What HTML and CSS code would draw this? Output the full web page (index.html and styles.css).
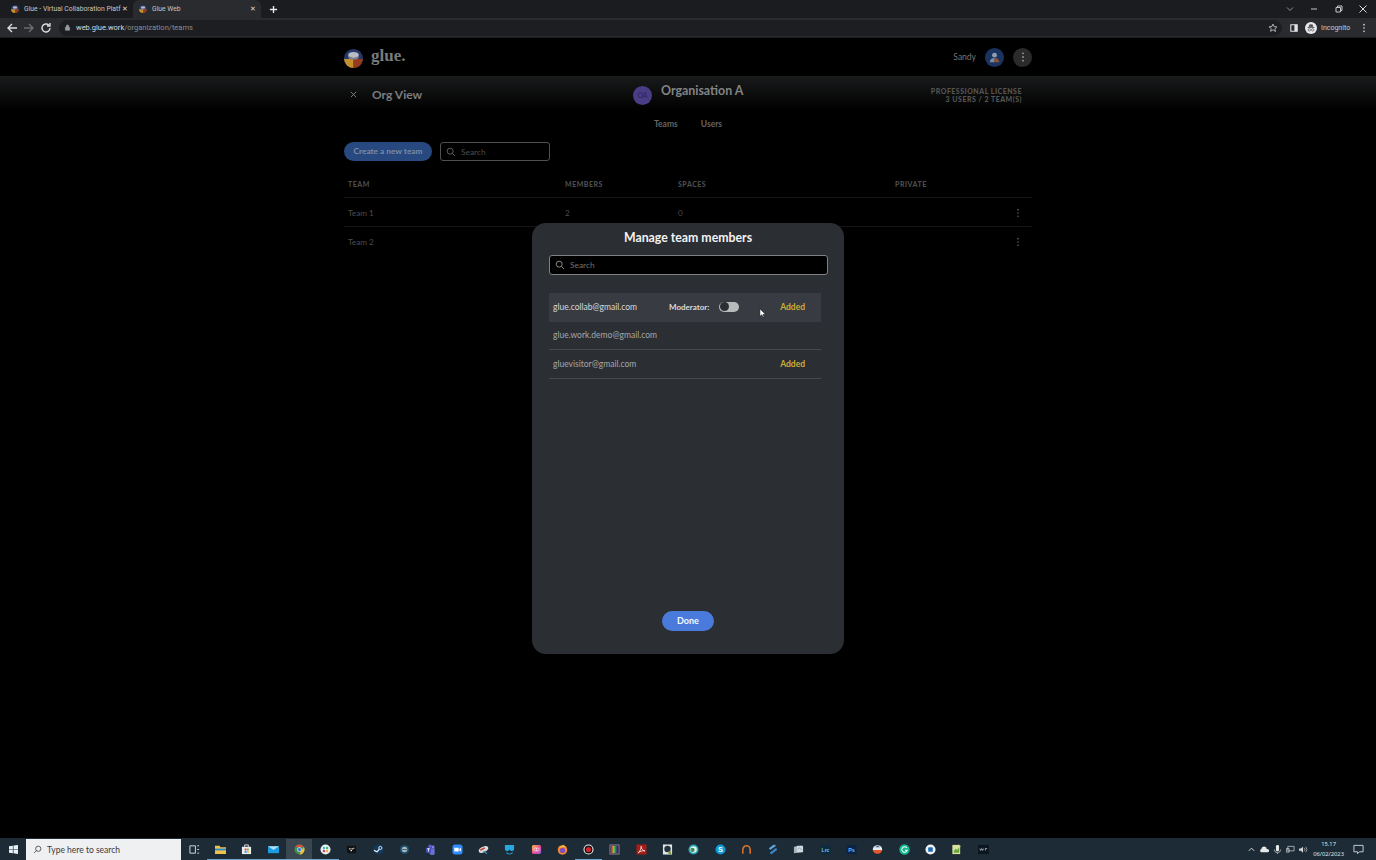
FILE: index.html
```html
<!DOCTYPE html>
<html lang="en">
<head>
<meta charset="utf-8">
<title>Glue Web</title>
<link rel="stylesheet" href="styles.css">
</head>
<body>
<div class="tabstrip">
  <div class="tab">
    <svg class="favicon" viewBox="0 0 16 16"><use href="#glue-logo"/></svg>
    <span class="tab-title">Glue - Virtual Collaboration Platf</span>
    <span class="tab-x">✕</span>
  </div>
  <div class="tab tab-active">
    <svg class="favicon" viewBox="0 0 16 16"><use href="#glue-logo"/></svg>
    <span class="tab-title">Glue Web</span>
    <span class="tab-x">✕</span>
  </div>
  <svg class="tab-new" viewBox="0 0 10 10"><path d="M5 1v8M1 5h8" stroke="#e8eaed" stroke-width="1.5"/></svg>
  <div class="win-controls">
    <svg viewBox="0 0 10 10"><path d="M2 3.5l3 3 3-3" fill="none" stroke="#8f9296" stroke-width="1"/></svg>
    <svg viewBox="0 0 10 10"><path d="M2 5h6" stroke="#c4c6c9" stroke-width="1"/></svg>
    <svg viewBox="0 0 10 10"><path d="M2 3.5h4.500v4.500h-4.500zM3.500 3.500v-1.500h4.500v4.500h-1.500" fill="none" stroke="#c4c6c9" stroke-width="1"/></svg>
    <svg viewBox="0 0 10 10"><path d="M1.500 1.500l7 7M8.500 1.500l-7 7" stroke="#d6d8da" stroke-width="1"/></svg>
  </div>
</div>
<div class="toolbar">
  <svg class="nav" viewBox="0 0 12 12"><path d="M11 6H2M6 2L2 6l4 4" fill="none" stroke="#dadce0" stroke-width="1.400"/></svg>
  <svg class="nav" viewBox="0 0 12 12"><path d="M1 6h9M6 2l4 4-4 4" fill="none" stroke="#6c6e71" stroke-width="1.400"/></svg>
  <svg class="nav" viewBox="0 0 12 12"><path d="M10 6a4 4 0 1 1-1.200-2.900M10 1v3H7" fill="none" stroke="#dadce0" stroke-width="1.400"/></svg>
  <div class="omnibox">
    <svg class="lock" viewBox="0 0 10 10"><path d="M2 4.500h6V9H2zM3.300 4.500V3a1.700 1.700 0 0 1 3.400 0v1.500" fill="#9a9c9f" stroke="#9a9c9f" stroke-width=".8" fill-rule="nonzero"/></svg>
    <span class="url"><span class="url-host">web.glue.work</span>/organization/teams</span>
    <svg class="star" viewBox="0 0 12 12"><path d="M6 1.300l1.400 3.100 3.300.3-2.500 2.200.8 3.300L6 8.200l-2.900 1.800.8-3.300-2.600-2.200 3.400-.3z" fill="none" stroke="#c8cacc" stroke-width="1"/></svg>
  </div>
  <svg class="panel" viewBox="0 0 10 10"><path d="M1 1h8v8H1z" fill="none" stroke="#e3e4e6" stroke-width="1.300"/><path d="M5.500 1H9v8H5.500z" fill="#e3e4e6"/></svg>
  <div class="incognito">
    <svg class="incognito-icon" viewBox="0 0 12 12"><circle cx="6" cy="6" r="6" fill="#e8e9ea"/><path d="M2.500 5.500h7M4 5.300l.6-2.500h2.800l.6 2.500" fill="#55585c" stroke="#55585c" stroke-width=".8"/><circle cx="4.300" cy="7.800" r="1.200" fill="none" stroke="#55585c" stroke-width=".7"/><circle cx="7.700" cy="7.800" r="1.200" fill="none" stroke="#55585c" stroke-width=".7"/></svg>
    <span>Incognito</span>
  </div>
  <svg class="chrome-menu" viewBox="0 0 4 12"><circle cx="2" cy="2" r="1" fill="#dadce0"/><circle cx="2" cy="6" r="1" fill="#dadce0"/><circle cx="2" cy="10" r="1" fill="#dadce0"/></svg>
</div>

<main class="page">
  <header class="app-header">
    <div class="wrap app-header-inner">
      <div class="brand">
        <svg class="brand-logo" viewBox="0 0 16 16"><use href="#glue-logo"/></svg>
        <span class="brand-name">glue.</span>
      </div>
      <div class="account">
        <span class="account-name">Sandy</span>
        <span class="avatar"><svg viewBox="0 0 20 20"><circle cx="10" cy="7.500" r="2.600" fill="#8d9cb3"/><path d="M5 15c0-3 2.500-4.500 5-4.500V15z" fill="#7b8ba3"/><path d="M10 10.500c2.500 0 5 1.500 5 4.500h-5z" fill="#8f5429"/></svg></span>
        <span class="more"><svg viewBox="0 0 4 12"><circle cx="2" cy="1.600" r="1.100" fill="#9a9b9d"/><circle cx="2" cy="6" r="1.100" fill="#9a9b9d"/><circle cx="2" cy="10.400" r="1.100" fill="#9a9b9d"/></svg></span>
      </div>
    </div>
  </header>

  <section class="org-bar">
    <div class="wrap org-bar-inner">
      <div class="org-left">
        <svg class="org-close" viewBox="0 0 8 8"><path d="M1 1l6 6M7 1L1 7" stroke="#8a8b8c" stroke-width="1"/></svg>
        <span class="org-view">Org View</span>
      </div>
      <div class="org-center">
        <span class="org-badge">OA</span>
        <span class="org-name">Organisation A</span>
      </div>
      <div class="org-license">PROFESSIONAL LICENSE<br>3 USERS / 2 TEAM(S)</div>
    </div>
  </section>

  <div class="wrap">
    <nav class="subnav"><span>Teams</span><span>Users</span></nav>
    <div class="actions">
      <span class="btn-create">Create a new team</span>
      <div class="search-dim">
        <svg class="search-icon" viewBox="0 0 12 12"><circle cx="5" cy="5" r="3.600" fill="none" stroke="#6f7071" stroke-width="1"/><path d="M7.800 7.800l3 3" stroke="#6f7071" stroke-width="1"/></svg>
        <span>Search</span>
      </div>
    </div>
    <div class="table">
      <div class="t-row t-head"><span>TEAM</span><span>MEMBERS</span><span>SPACES</span><span>PRIVATE</span><span></span></div>
      <div class="t-row"><span>Team 1</span><span>2</span><span>0</span><span></span><svg class="kebab" viewBox="0 0 4 12"><circle cx="2" cy="2" r="1" fill="#5c5c5c"/><circle cx="2" cy="6" r="1" fill="#5c5c5c"/><circle cx="2" cy="10" r="1" fill="#5c5c5c"/></svg></div>
      <div class="t-row"><span>Team 2</span><span></span><span></span><span></span><svg class="kebab" viewBox="0 0 4 12"><circle cx="2" cy="2" r="1" fill="#5c5c5c"/><circle cx="2" cy="6" r="1" fill="#5c5c5c"/><circle cx="2" cy="10" r="1" fill="#5c5c5c"/></svg></div>
    </div>
  </div>

  <div class="modal">
    <h2 class="modal-title">Manage team members</h2>
    <div class="modal-search">
      <svg class="search-icon" viewBox="0 0 12 12"><circle cx="5" cy="5" r="3.600" fill="none" stroke="#a3a5a8" stroke-width="1"/><path d="M7.800 7.800l3 3" stroke="#a3a5a8" stroke-width="1"/></svg>
      <span>Search</span>
    </div>
    <div class="members">
      <div class="member member-hover">
        <span class="member-mail">glue.collab@gmail.com</span>
        <span class="mod-label">Moderator:</span>
        <span class="toggle"><span class="toggle-knob"></span></span>
        <span class="added">Added</span>
      </div>
      <div class="member">
        <span class="member-mail">glue.work.demo@gmail.com</span>
      </div>
      <div class="member">
        <span class="member-mail">gluevisitor@gmail.com</span>
        <span class="added">Added</span>
      </div>
    </div>
    <span class="btn-done">Done</span>
  </div>
  <svg class="cursor" viewBox="0 0 8 12"><path d="M1 .5v9l2.200-2 1.300 3.200 1.300-.6-1.300-3h3z" fill="#fff" stroke="#000" stroke-width=".6"/></svg>
</main>

<footer class="taskbar">
  <div class="start"><svg viewBox="0 0 10 10"><path d="M0 1.300l4.300-.6v4H0zM5 .6L10 0v4.700H5zM0 5.300h4.300v4L0 8.700zM5 5.300h5V10l-5-.7z" fill="#e8f0f5"/></svg></div>
  <div class="win-search">
    <svg viewBox="0 0 12 12"><circle cx="7" cy="5" r="3.500" fill="none" stroke="#333" stroke-width="1"/><path d="M4.500 7.500L1.500 10.500" stroke="#333" stroke-width="1"/></svg>
    <span>Type here to search</span>
  </div>
  <div class="tasks">
    <span class="task"><svg viewBox="0 0 12 12"><path d="M1 2h6v8H1zM9 2h2M9 6h2M9 10h2" fill="none" stroke="#dfe5e8" stroke-width="1"/></svg></span>
    <span class="task task-open"><svg viewBox="0 0 12 12"><path d="M0 2h5l1 1.500h6V11H0z" fill="#f0c24b"/><path d="M0 5h12v2H0z" fill="#2c8ac9"/></svg></span>
    <span class="task task-open"><svg viewBox="0 0 12 12"><path d="M1 3h10v8H1z" fill="#e9edf0"/><path d="M4 3V1h4v2" fill="none" stroke="#e9edf0"/><path d="M4 5h2v2H4z" fill="#e0442e"/><path d="M6.500 5h2v2h-2z" fill="#6fb33f"/><path d="M4 7.500h2v2H4z" fill="#2f8fd6"/><path d="M6.500 7.500h2v2h-2z" fill="#f2b632"/></svg></span>
    <span class="task task-open"><svg viewBox="0 0 12 12"><path d="M0 2.500h12V10H0z" fill="#1d9be0"/><path d="M0 2.500l6 4 6-4z" fill="#a9e0fb"/></svg></span>
    <span class="task task-active"><svg viewBox="0 0 12 12"><circle cx="6" cy="6" r="5.500" fill="#3f8f4e"/><path d="M6 .5a5.500 5.500 0 0 1 4.800 2.800H6z" fill="#dd4c3a"/><path d="M1.200 3.300A5.500 5.500 0 0 1 6 .5v3z" fill="#dd4c3a"/><path d="M10.800 3.300A5.500 5.500 0 0 1 6 11.500L8 7z" fill="#eec03f"/><circle cx="6" cy="6" r="2.300" fill="#3a7bd5" stroke="#eee" stroke-width=".8"/></svg></span>
    <span class="task task-open"><svg viewBox="0 0 12 12"><circle cx="6" cy="6" r="5.500" fill="#e9eef0"/><circle cx="4.300" cy="4.300" r="1.300" fill="#3fb7d8"/><circle cx="7.700" cy="4.300" r="1.300" fill="#4cb56f"/><circle cx="4.300" cy="7.700" r="1.300" fill="#d8336b"/><circle cx="7.700" cy="7.700" r="1.300" fill="#ecb22e"/></svg></span>
    <span class="task"><svg viewBox="0 0 12 12"><rect x="1" y="2" width="10" height="8" rx="1.500" fill="#111"/><path d="M3.500 4.500h1.500V6H3.500zM6 4.500h1.500V6H6zM8 4h1v1.500H8zM5 6.500h1.500V8H5z" fill="#eee"/></svg></span>
    <span class="task"><svg viewBox="0 0 12 12"><circle cx="6" cy="6" r="5.500" fill="#123a5c"/><circle cx="8" cy="4.300" r="1.700" fill="none" stroke="#e8eef2"/><path d="M1 7l3.500 1.500L7 5.500" fill="none" stroke="#e8eef2" stroke-width="1.400"/></svg></span>
    <span class="task"><svg viewBox="0 0 12 12"><circle cx="6" cy="6" r="5" fill="#20506f"/><circle cx="6" cy="6" r="3" fill="#a9b6bd"/><path d="M3.500 6h5" stroke="#3b5c70"/></svg></span>
    <span class="task"><svg viewBox="0 0 12 12"><circle cx="8.800" cy="3.200" r="1.600" fill="#7b83eb"/><circle cx="5.600" cy="2.600" r="2" fill="#5b5fc7"/><path d="M3 4.500h7.500V9a2.500 2.500 0 0 1-5 1.500A3 3 0 0 1 3 8z" fill="#6a6fd0"/><path d="M1 4h5.500v5.500H1z" fill="#464eb8"/><path d="M2.300 5.200h3M3.800 5.200v3.200" stroke="#fff" stroke-width=".9"/></svg></span>
    <span class="task"><svg viewBox="0 0 12 12"><rect x=".5" y=".5" width="11" height="11" rx="3" fill="#2d8cff"/><path d="M2.500 4h4.800v4.200H2.500zM7.800 5.600L9.700 4v4.200L7.800 6.800z" fill="#fff"/></svg></span>
    <span class="task"><svg viewBox="0 0 12 12"><ellipse cx="6" cy="6" rx="5.500" ry="3" fill="#d9dee0" transform="rotate(-25 6 6)"/><path d="M2 6l5-2.500 1 1.500-5 2.500z" fill="#c2493f"/><path d="M6 8l4 2.500" stroke="#3f78a3" stroke-width="1.400"/></svg></span>
    <span class="task"><svg viewBox="0 0 12 12"><path d="M1 1h10v4.500a2 2 0 0 1-2 2H7.500L6 6 4.500 7.500H3a2 2 0 0 1-2-2z" fill="#29a8e0"/><path d="M2.500 9.500a5 5 0 0 0 7 0" fill="none" stroke="#29a8e0" stroke-width="1.200"/></svg></span>
    <span class="task"><svg viewBox="0 0 12 12"><defs><linearGradient id="cc" x1="0" y1="0" x2="1" y2="1"><stop offset="0" stop-color="#f6c343"/><stop offset=".5" stop-color="#ee4d8b"/><stop offset="1" stop-color="#8e5ce6"/></linearGradient></defs><rect x="1" y="1" width="10" height="10" rx="2" fill="url(#cc)"/><circle cx="4.800" cy="6" r="1.800" fill="none" stroke="#fff" stroke-width=".7"/><circle cx="7.200" cy="6" r="1.800" fill="none" stroke="#fff" stroke-width=".7"/></svg></span>
    <span class="task"><svg viewBox="0 0 12 12"><circle cx="6" cy="6.500" r="5.200" fill="#f5862b"/><circle cx="6" cy="7" r="2.800" fill="#7d4bc4"/><path d="M3 2c1 1.500 3 0 4-1.500 0 1 1.500 1.500 3 3.500-2-1-3-1-7 0z" fill="#f9c23c"/></svg></span>
    <span class="task task-open"><svg viewBox="0 0 12 12"><circle cx="6" cy="6" r="5.500" fill="#eee"/><circle cx="6" cy="6" r="4.300" fill="#111"/><circle cx="6" cy="6" r="2.800" fill="#d8232a"/></svg></span>
    <span class="task"><svg viewBox="0 0 12 12"><rect x="1" y="1" width="10" height="10" fill="#3a2e3f" stroke="#a48fa8" stroke-width=".8"/><path d="M2.500 2h1.400v8H2.500z" fill="#e2483d"/><path d="M3.900 2h1.400v8H3.900z" fill="#f0b429"/><path d="M5.300 2h1.400v8H5.300z" fill="#4fb848"/><path d="M6.700 2h1.400v8H6.700z" fill="#3a7bd5"/></svg></span>
    <span class="task"><svg viewBox="0 0 12 12"><rect x=".5" y=".5" width="11" height="11" fill="#a81c17"/><path d="M2.500 9.500C5 7 6 4 5.500 2.500 5.500 5 7.500 7.500 9.800 7.500 7 7 4.500 8 2.500 9.500z" fill="none" stroke="#fff" stroke-width=".8"/></svg></span>
    <span class="task"><svg viewBox="0 0 12 12"><rect x="1" y=".5" width="10" height="11" fill="#dfe4e6"/><circle cx="6" cy="5.500" r="3.500" fill="#24333e"/><path d="M7 8h3v3H7z" fill="#8a9a3d"/></svg></span>
    <span class="task"><svg viewBox="0 0 12 12"><circle cx="6" cy="6" r="5.500" fill="#2aa7c0"/><circle cx="6" cy="6" r="3.600" fill="#e8f7ec"/><circle cx="5" cy="6.500" r="2.300" fill="#3e8e5a"/></svg></span>
    <span class="task"><svg viewBox="0 0 12 12"><circle cx="6" cy="6" r="5.500" fill="#0f9ad6"/><text class="ic-letter" x="6" y="9" text-anchor="middle">S</text></svg></span>
    <span class="task"><svg viewBox="0 0 12 12"><path d="M2 10.500V6a4 4 0 0 1 8 0v4.500" fill="none" stroke="#d8722b" stroke-width="1.700"/></svg></span>
    <span class="task"><svg viewBox="0 0 12 12"><path d="M7.500.5L2 4.500l1.500 2L10 2z" fill="#5aa5e0"/><path d="M10 4L3 9.500l1.500 2L11 6.500z" fill="#3a85c5"/></svg></span>
    <span class="task"><svg viewBox="0 0 12 12"><path d="M1 3l8-1.500V9L1 10z" fill="#a9b3b8"/><path d="M4 2h7v7H4z" fill="#d2dade"/><path d="M5 6l2-2 3 3" fill="none" stroke="#7d9eb5" stroke-width=".9"/></svg></span>
    <span class="task"><svg viewBox="0 0 12 12"><rect x=".5" y="1" width="11" height="10" rx="1" fill="#0d2b3c"/><text class="ic-lr" x="6" y="8.300" text-anchor="middle">Lrc</text></svg></span>
    <span class="task"><svg viewBox="0 0 12 12"><rect x=".5" y="1" width="11" height="10" rx="1" fill="#0b2447"/><text class="ic-ps" x="6" y="8.300" text-anchor="middle">Ps</text></svg></span>
    <span class="task"><svg viewBox="0 0 12 12"><path d="M.8 6.500a5.200 5.200 0 0 1 10.400 0z" fill="#e8ecee"/><path d="M.8 6.500h10.400A5.200 5.200 0 0 1 6 10.500a5.200 5.200 0 0 1-5.200-4z" fill="#e2592b"/><path d="M3.500 3.500a3 3 0 0 1 5 0z" fill="#2b5d8c"/></svg></span>
    <span class="task"><svg viewBox="0 0 12 12"><circle cx="6" cy="6" r="5.700" fill="#15b58e"/><path d="M8.500 4.200A3 3 0 1 0 9 6.800H6.500" fill="none" stroke="#fff" stroke-width="1.100"/></svg></span>
    <span class="task"><svg viewBox="0 0 12 12"><circle cx="6" cy="6" r="5.500" fill="#eff2f3"/><rect x="3.500" y="3.500" width="5" height="5" rx="1" fill="#1c6db5"/></svg></span>
    <span class="task"><svg viewBox="0 0 12 12"><path d="M1.500 1h8.500v10H1.500z" fill="#d8e4a0"/><path d="M3 8l2-3 1.500 1.500L9 3.500V9.500H3z" fill="#6aa63c"/><path d="M8 .5l2.500 2.500" stroke="#c2a24a"/></svg></span>
    <span class="task"><svg viewBox="0 0 12 12"><rect x="0" y="1" width="12" height="10" fill="#0b1620"/><path d="M2 5l1 2 1-2 1 2 1-2M8 7V5l2 0" fill="none" stroke="#cfd6da" stroke-width=".8"/></svg></span>
  </div>
  <div class="tray">
    <svg viewBox="0 0 10 10"><path d="M2 6.500l3-3 3 3" fill="none" stroke="#e6e9ea"/></svg>
    <svg viewBox="0 0 10 10"><path d="M1 8a2 2 0 0 1 .500-3.500 3 3 0 0 1 6 .300A1.700 1.700 0 0 1 9 8z" fill="#e6e9ea"/></svg>
    <svg viewBox="0 0 10 10"><rect x="3.300" y="0" width="3.400" height="7" rx="1.500" fill="#e6e9ea"/><path d="M1.500 5a3.500 3.500 0 0 0 7 0M5 8.500V10" fill="none" stroke="#e6e9ea" stroke-width=".7"/></svg>
    <svg viewBox="0 0 10 10"><path d="M2 1.500h7v5H2zM.5 4h3v4h-3z" fill="none" stroke="#e6e9ea" stroke-width=".7"/></svg>
    <svg viewBox="0 0 10 10"><path d="M0 4h2l2.500-2v6.500L2 6.500H0z" fill="#d3d7d9"/><path d="M6 3.500a2.500 2.500 0 0 1 0 3M7.500 2a4.500 4.500 0 0 1 0 6" fill="none" stroke="#d3d7d9" stroke-width=".7"/></svg>
    <div class="clock"><span>15.17</span><span>06/02/2023</span></div>
    <svg class="notif" viewBox="0 0 12 12"><path d="M1 1.500h10v7H7L5 10.500V8.500H1z" fill="none" stroke="#e6e9ea" stroke-width=".9"/></svg>
  </div>
</footer>

<svg class="defs" width="0" height="0" aria-hidden="true">
  <symbol id="glue-logo" viewBox="0 0 16 16">
    <circle cx="8" cy="8" r="8" fill="#26386a"/>
    <path d="M0 8.500h8V16A8 8 0 0 1 0 8.500z" fill="#c48f2c"/>
    <path d="M8 8.500h8A8 8 0 0 1 8 16z" fill="#963b1c"/>
    <ellipse cx="8" cy="5" rx="4.500" ry="2.500" fill="#b9bcc2"/>
    <path d="M3.500 5v2c0 1 2 2 4.500 2s4.500-1 4.500-2V5c0 1-2 2.400-4.500 2.400S3.500 6 3.500 5z" fill="#7f8188"/>
  </symbol>
</svg>
</body>
</html>
```
FILE: styles.css
```css
* { box-sizing: border-box; }
html, body { margin: 0; padding: 0; }
body {
  width: 1376px;
  height: 860px;
  overflow: hidden;
  display: flex;
  flex-direction: column;
  background: #000;
  font-family: "Lato", "Noto Sans", sans-serif;
}
.defs { position: absolute; }

/* browser chrome */
.tabstrip {
  height: 18px;
  background: #1b1c1f;
  display: flex;
  align-items: flex-end;
  padding-left: 5px;
  flex: none;
}
.tab {
  width: 128px;
  height: 18px;
  display: flex;
  align-items: center;
  padding: 0 2px 0 6px;
  color: #c3c5c8;
  font: 6.800px "Roboto", sans-serif;
}
.tab-active { background: #2a2b2e; border-radius: 6px 6px 0 0; }
.favicon { width: 8px; height: 8px; margin-right: 5px; flex: none; }
.tab-title { flex: 1; white-space: nowrap; min-width: 0; }
.tab-x { font-size: 7px; color: #d6d7d9; width: 12px; text-align: center; flex: none; }
.tab-new { width: 9px; height: 9px; margin-left: 8px; align-self: center; }
.win-controls {
  margin-left: auto;
  align-self: center;
  display: flex;
  gap: 14.400px;
  padding-right: 8px;
}
.win-controls svg { width: 10px; height: 10px; }

.toolbar {
  height: 20px;
  background: #2a2b2e;
  display: flex;
  align-items: center;
  padding-left: 6px;
  flex: none;
  border-bottom: 1px solid #1a1b1d;
}
.nav { width: 12px; height: 12px; margin-right: 5px; flex: none; }
.omnibox {
  width: 1223px;
  height: 16px;
  margin-left: 2px;
  background: #1d1e21;
  border-radius: 8px;
  display: flex;
  align-items: center;
  padding: 0 4px 0 5px;
  color: #8b8d90;
  font: 7.500px "Roboto", sans-serif;
}
.lock { width: 7px; height: 7px; margin-right: 5px; }
.url { flex: 1; }
.url-host { color: #d9dadc; }
.star { width: 10px; height: 10px; }
.panel { width: 8px; height: 8px; margin-left: 8px; }
.incognito {
  display: flex;
  align-items: center;
  gap: 4px;
  margin-left: 7px;
  color: #c9cbcd;
  font: 7px "Roboto", sans-serif;
}
.incognito-icon { width: 12px; height: 12px; }
.chrome-menu { width: 4px; height: 10px; margin-left: 12px; }

/* app */
.page {
  flex: 1;
  position: relative;
  background: #000;
  min-height: 0;
}
.wrap { width: 688px; margin-left: 344px; }

.app-header { height: 38px; }
.app-header-inner {
  height: 100%;
  display: flex;
  align-items: center;
  justify-content: space-between;
}
.brand { display: flex; align-items: center; gap: 8px; margin-top: 2px; }
.brand-logo { width: 19px; height: 19px; }
.brand-name {
  font: 700 17px "Liberation Serif", serif;
  color: #7a7a7a;
  margin-top: -4px;
}
.account { display: flex; align-items: center; font-size: 8.500px; color: #757575; }
.account-name { margin-right: 9px; }
.avatar {
  width: 19px;
  height: 19px;
  border-radius: 50%;
  background: #1a3360;
  margin-right: 9px;
  display: flex;
}
.avatar svg { width: 19px; height: 19px; }
.more {
  width: 19px;
  height: 19px;
  border-radius: 50%;
  background: #2b2b2c;
  display: flex;
  align-items: center;
  justify-content: center;
}
.more svg { width: 4px; height: 10px; }

.org-bar {
  height: 35px;
  background: linear-gradient(#191a1b, #000);
}
.org-bar-inner {
  height: 100%;
  display: grid;
  grid-template-columns: 289px 1fr auto;
  align-items: center;
}
.org-left { display: flex; align-items: center; padding-top: 1px; }
.org-close { width: 7px; height: 7px; margin: 0 15px 0 6px; }
.org-view { font-size: 12px; font-weight: 700; color: #7b7c7d; }
.org-center { display: flex; align-items: flex-start; gap: 9px; }
.org-badge {
  width: 19px;
  height: 19px;
  margin-top: 3px;
  border-radius: 50%;
  background: #4a3d86;
  color: #2c2455;
  font-size: 7px;
  display: flex;
  align-items: center;
  justify-content: center;
}
.org-name { font-size: 12.400px; font-weight: 700; color: #838485; line-height: 18px; margin-top: -1px; }
.org-license {
  font-size: 7px;
  line-height: 7.500px;
  font-weight: 900;
  letter-spacing: .5px;
  color: #555;
  text-align: right;
  margin-right: 10px;
  margin-top: 4px;
}

.subnav {
  display: flex;
  gap: 23px;
  padding-left: 310px;
  margin-top: 8px;
  height: 16px;
  font-size: 8.500px;
  font-weight: 700;
  line-height: 11px;
  color: #656565;
}
.actions { display: flex; gap: 8px; margin-top: 7px; }
.btn-create {
  width: 88px;
  height: 19px;
  border-radius: 10px;
  background: #28497f;
  color: #7d8ba3;
  font-size: 8.300px;
  font-weight: 700;
  line-height: 19px;
  text-align: center;
}
.search-dim {
  width: 110px;
  height: 19px;
  border: 1px solid #505050;
  border-radius: 3px;
  display: flex;
  align-items: center;
  color: #4d4d4d;
  font-size: 8.400px;
  padding-left: 5px;
}
.search-icon { width: 10px; height: 10px; margin-right: 5px; flex: none; }

.table { margin-top: 13px; }
.t-row {
  display: grid;
  grid-template-columns: 217px 113px 217px 1fr 16px;
  align-items: center;
  height: 29px;
  padding: 1px 6px 0 4px;
  border-bottom: 1px solid #151515;
  font-size: 8.200px;
  color: #4b4b4b;
}
.t-row:last-child { border-bottom: 0; padding-top: 0; }
.t-head {
  height: 24px;
  padding: 0 6px 3px 4px;
  font-size: 7px;
  font-weight: 900;
  letter-spacing: .5px;
  color: #4c4c4c;
}
.kebab { width: 4px; height: 10px; justify-self: center; }

/* modal */
.modal {
  position: absolute;
  left: 532px;
  top: 185px;
  width: 312px;
  height: 431px;
  background: #2b2e33;
  border-radius: 14px;
  padding: 6px 17px 0 17px;
  display: flex;
  flex-direction: column;
}
.modal-title {
  margin: 0;
  font-size: 12.300px;
  font-weight: 700;
  line-height: 17px;
  text-align: center;
  color: #f3f3f3;
}
.modal-search {
  width: 279px;
  height: 20px;
  margin-top: 9px;
  background: #000;
  border: 1px solid #7f8184;
  border-radius: 3px;
  display: flex;
  align-items: center;
  padding-left: 5px;
  color: #6e7072;
  font-size: 8.400px;
}
.members { width: 272px; margin-top: 18px; }
.member {
  height: 28.500px;
  display: flex;
  align-items: center;
  padding: 0 16px 0 4px;
  border-bottom: 1px solid #45484c;
  font-size: 8.500px;
  color: #a6a8aa;
}
.member-hover { background: #383b41; border-bottom-color: #383b41; }
.member-hover .member-mail { color: #d8d9da; }
.member-mail { width: 116px; white-space: nowrap; }
.mod-label { width: 50px; font-size: 8px; font-weight: 700; color: #dcdcdc; white-space: nowrap; }
.toggle {
  width: 20px;
  height: 10px;
  border-radius: 5px;
  background: #b9babc;
  padding: .5px;
  display: block;
}
.toggle-knob {
  display: block;
  width: 9px;
  height: 9px;
  border-radius: 50%;
  background: #2b2e33;
}
.added { margin-left: auto; color: #cfae35; font-weight: 700; }
.btn-done {
  align-self: center;
  margin-top: auto;
  margin-bottom: 23px;
  width: 52px;
  height: 20px;
  border-radius: 10px;
  background: #4a7bdc;
  color: #f4f6fb;
  font-size: 9px;
  font-weight: 700;
  line-height: 20px;
  text-align: center;
}
.cursor { position: absolute; left: 759px; top: 270px; width: 7px; height: 11px; }

/* taskbar */
.taskbar {
  height: 22px;
  background: #1c2b35;
  display: flex;
  align-items: stretch;
  flex: none;
  padding-top: 1px;
}
.start { width: 26px; display: flex; align-items: center; justify-content: center; }
.start svg { width: 9px; height: 9px; }
.win-search {
  width: 155px;
  background: #eef0f1;
  display: flex;
  align-items: center;
  padding-left: 7px;
  color: #3a3a3a;
  font: 8.500px "Lato", sans-serif;
}
.win-search svg { width: 9px; height: 9px; margin-right: 5px; }
.tasks { display: flex; }
.task {
  width: 26.300px;
  display: flex;
  align-items: center;
  justify-content: center;
  border-bottom: 1px solid transparent;
}
.task svg { width: 11px; height: 11px; }
.task-open { border-bottom-color: #6aa9d1; }
.task-active { background: #3a4750; border-bottom-color: #6aa9d1; }
.ic-letter { font: 700 8px "Liberation Sans", sans-serif; fill: #fff; }
.ic-lr { font: 700 5.500px "Liberation Sans", sans-serif; fill: #7cc4f2; }
.ic-ps { font: 700 6px "Liberation Sans", sans-serif; fill: #6ab6f5; }
.tray {
  margin-left: auto;
  display: flex;
  align-items: center;
  gap: 4px;
  padding-right: 12px;
  color: #dfe4e6;
}
.tray svg { width: 9px; height: 9px; }
.clock {
  display: flex;
  flex-direction: column;
  align-items: center;
  font: 5.800px/9.500px "Noto Sans", sans-serif;
  margin: 0 5px 0 1px;
}
.tray .notif { width: 11px; height: 11px; }
```
